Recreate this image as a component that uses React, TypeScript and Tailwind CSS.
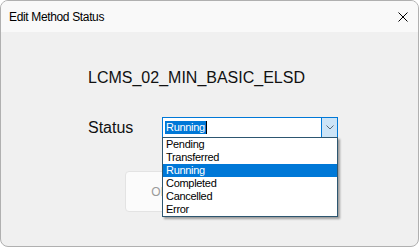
import { useState } from 'react';

const statuses = ['Pending', 'Transferred', 'Running', 'Completed', 'Cancelled', 'Error'];

export default function App() {
    const [status, setStatus] = useState('Running');

    return (
        <div className="w-[419px] h-[247px] bg-[#f0f0f0] border border-[#b0b0b0] rounded-lg overflow-hidden flex flex-col" style={{ fontFamily: '"Liberation Sans", Arial, sans-serif' }}>
            {/* Title bar */}
            <div className="h-[31px] shrink-0 bg-[#f9f9f9] flex items-center justify-between pl-[8px] pr-[10px]">
                <span className="text-[12px] tracking-[-0.35px] text-black">Edit Method Status</span>
                <svg width="10" height="10" viewBox="0 0 10 10" className="text-black">
                    <path d="M0.5 0.5 L9.5 9.5 M9.5 0.5 L0.5 9.5" stroke="currentColor" strokeWidth="1" />
                </svg>
            </div>

            {/* Body */}
            <div className="flex flex-col pl-[87px]">
                <p className="mt-[37px] text-[16px] leading-[18px] text-[#111]">LCMS_02_MIN_BASIC_ELSD</p>

                <div className="mt-[30px] flex items-center">
                    <span className="w-[74px] text-[16px] leading-[18px] text-[#111]">Status</span>

                    {/* Combo box */}
                    <div className="relative z-10">
                        <div className="w-[176px] h-[21px] bg-white border border-[#0078d7] flex">
                            <div className="flex-1 flex items-center pl-[2px]">
                                <span className="bg-[#0078d7] text-white text-[11px] leading-[13px] px-[1px] tracking-[-0.3px]">{status}</span>
                                <span className="w-px h-[13px] bg-black" />
                            </div>
                            <div className="w-[16px] h-full bg-[#cce4f7] border-l border-[#0078d7] flex items-center justify-center">
                                <svg width="8" height="5" viewBox="0 0 8 5">
                                    <path d="M0.5 0.5 L4 4 L7.5 0.5" fill="none" stroke="#5a6a78" strokeWidth="1" />
                                </svg>
                            </div>
                        </div>

                        {/* Open list */}
                        <ul className="absolute left-0 top-[20px] w-[176px] bg-white border border-[#2d5670] shadow-[2px_2px_2px_rgba(0,0,0,0.35)]">
                            {statuses.map((s) => (
                                <li
                                    key={s}
                                    onClick={() => setStatus(s)}
                                    className={`h-[13px] leading-[13px] pl-[3px] text-[11px] tracking-[-0.3px] ${
                                        s === status ? 'bg-[#0078d7] text-white' : 'text-black'
                                    }`}
                                >
                                    {s}
                                </li>
                            ))}
                        </ul>
                    </div>
                </div>

                {/* Buttons */}
                <div className="mt-[33px] ml-[37px] flex gap-[10px]">
                    <button className="w-[70px] h-[41px] bg-[#fbfbfb] border border-[#e3e3e3] rounded-[4px] text-[12px] text-[#9a9a9a]">OK</button>
                    <button className="w-[70px] h-[41px] bg-[#fbfbfb] border border-[#e3e3e3] rounded-[4px] text-[12px] text-[#9a9a9a]">Cancel</button>
                </div>
            </div>
        </div>
    );
}
